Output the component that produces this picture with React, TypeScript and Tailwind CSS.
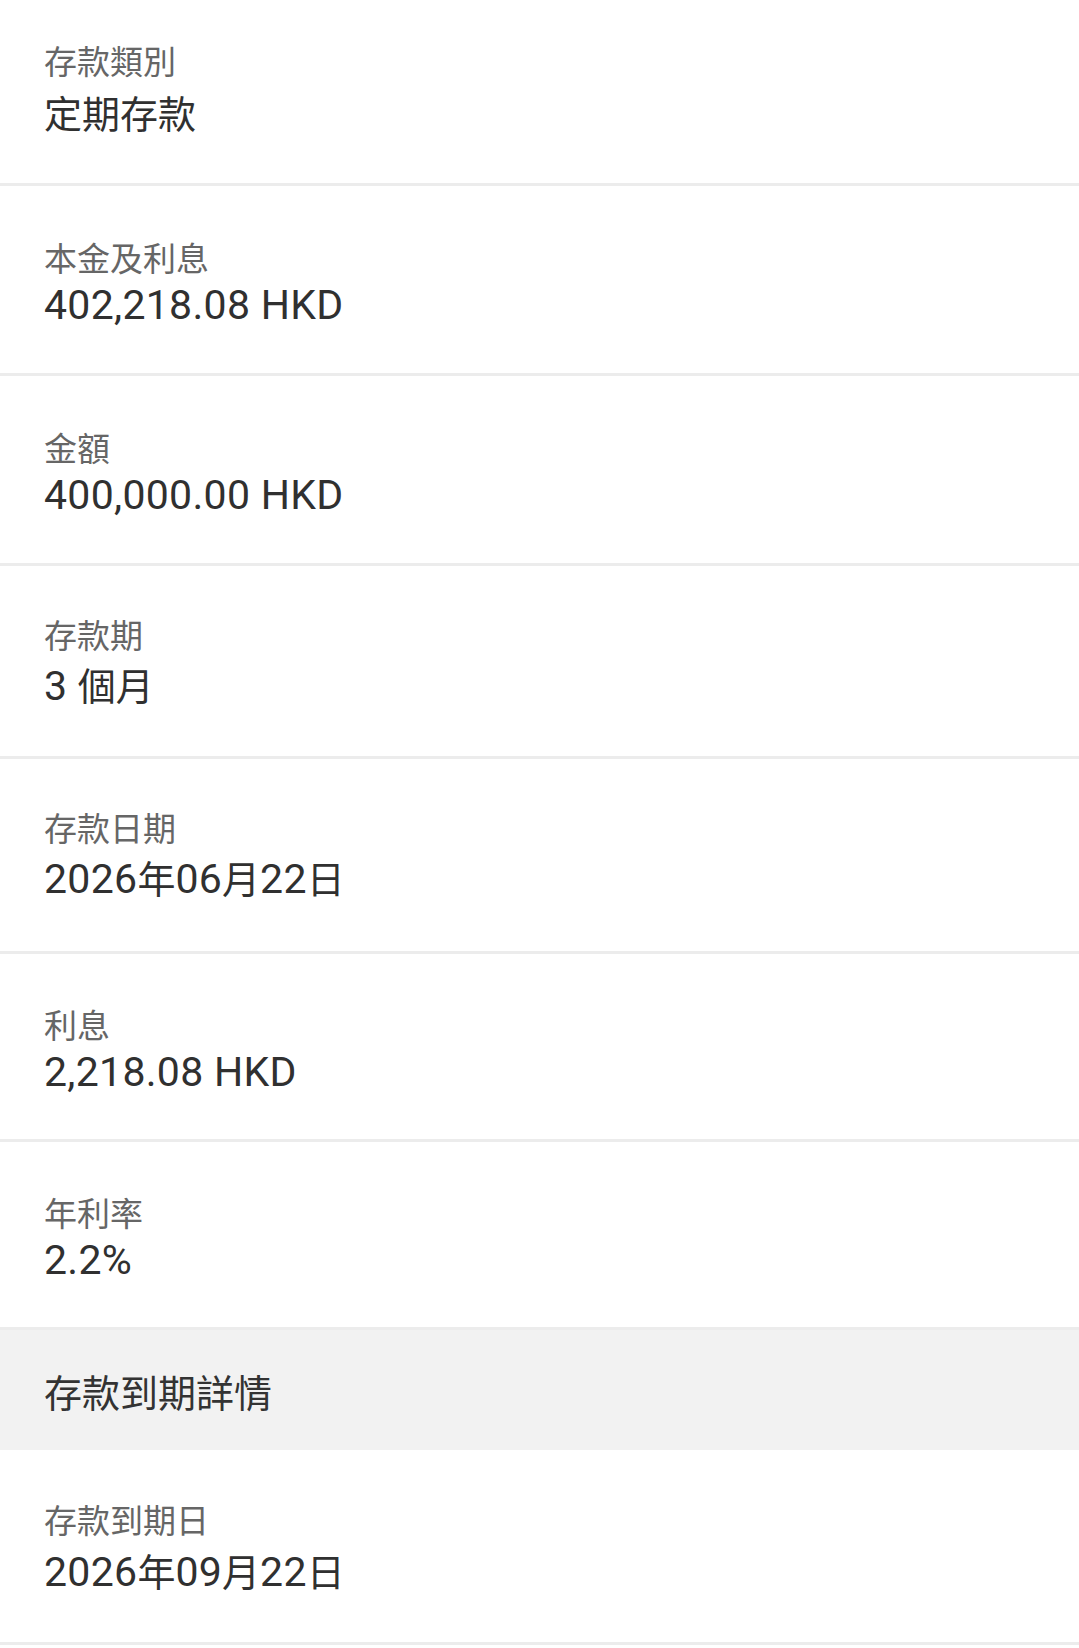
import React from "react";

type Row = {
  label: string;
  value: string;
  pt: string;
  mt: string;
  pb: string;
};

const topRows: Row[] = [
  { label: "存款類別", value: "定期存款", pt: "pt-[42px]", mt: "mt-[8px]", pb: "pb-[45px]" },
  { label: "本金及利息", value: "402,218.08 HKD", pt: "pt-[53px]", mt: "mt-[2px]", pb: "pb-[44px]" },
  { label: "金額", value: "400,000.00 HKD", pt: "pt-[53px]", mt: "mt-[2px]", pb: "pb-[44px]" },
  { label: "存款期", value: "3 個月", pt: "pt-[50px]", mt: "mt-[6px]", pb: "pb-[46px]" },
  { label: "存款日期", value: "2026年06月22日", pt: "pt-[50px]", mt: "mt-[6px]", pb: "pb-[48px]" },
  { label: "利息", value: "2,218.08 HKD", pt: "pt-[52px]", mt: "mt-[2px]", pb: "pb-[43px]" },
  { label: "年利率", value: "2.2%", pt: "pt-[52px]", mt: "mt-[2px]", pb: "pb-[43px]" },
];

const bottomRows: Row[] = [
  { label: "存款到期日", value: "2026年09月22日", pt: "pt-[51px]", mt: "mt-[7px]", pb: "pb-[46px]" },
];

const CJK = /([\u3000-\u9fff\uff00-\uffef]+)/;

function Value({ text }: { text: string }) {
  const parts = text.split(CJK).filter((p) => p.length > 0);
  return (
    <>
      {parts.map((p, i) =>
        CJK.test(p) ? (
          <span key={i} className="text-[38px] leading-[40px]">
            {p}
          </span>
        ) : (
          <span key={i} className="tracking-[0.3px]">
            {p}
          </span>
        )
      )}
    </>
  );
}

function InfoRow({ row }: { row: Row }) {
  return (
    <div className={`border-b-[3px] border-[#ececec] pl-[44px] pr-[44px] ${row.pt} ${row.pb}`}>
      <div className="text-[33px] leading-[40px] text-[#666666]">{row.label}</div>
      <div
        className={`font-['Roboto','Noto_Sans_CJK_TC',sans-serif] text-[41px] leading-[48px] text-[#303030] ${row.mt}`}
      >
        <Value text={row.value} />
      </div>
    </div>
  );
}

export default function App() {
  return (
    <div className="min-h-[1648px] w-full bg-white font-['Noto_Sans','Noto_Sans_CJK_TC',sans-serif]">
      {topRows.map((r) => (
        <InfoRow key={r.label} row={r} />
      ))}
      <div className="bg-[#f2f2f2] pl-[44px] pt-[38px] pb-[34px]">
        <div className="text-[38px] leading-[48px] text-[#333333]">存款到期詳情</div>
      </div>
      {bottomRows.map((r) => (
        <InfoRow key={r.label} row={r} />
      ))}
    </div>
  );
}
